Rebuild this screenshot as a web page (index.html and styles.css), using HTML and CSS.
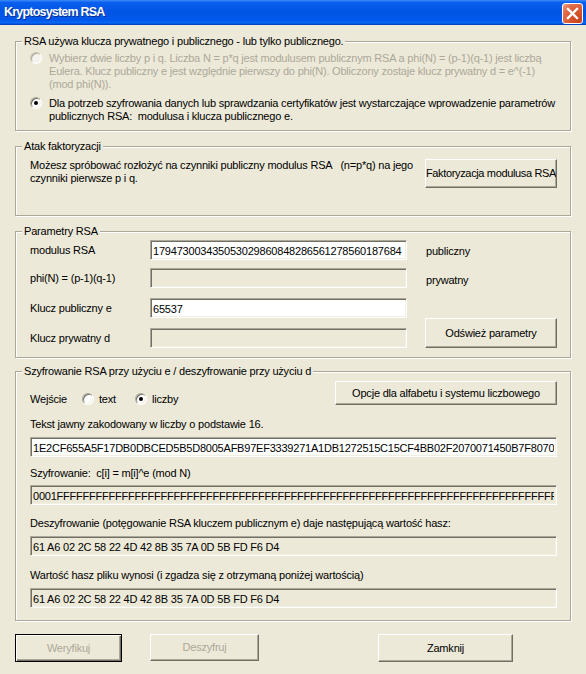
FILE: index.html
```html
<!DOCTYPE html>
<html lang="pl">
<head>
<meta charset="utf-8">
<title>Kryptosystem RSA</title>
<link rel="stylesheet" href="styles.css">
</head>
<body>
<div class="titlebar">
  <span class="title">Kryptosystem RSA</span>
  <span class="close" aria-label="Zamknij">
    <svg width="19" height="19" viewBox="0 0 19 19"><path d="M5 5 L14 14 M14 5 L5 14" stroke="#fff" stroke-width="2.4" stroke-linecap="square" fill="none"/></svg>
  </span>
</div>

<div class="main">
  <section class="group g1">
    <div class="legend">RSA używa klucza prywatnego i publicznego - lub tylko publicznego.</div>
    <div class="opt disabled first">
      <span class="radio"></span>
      <p>Wybierz dwie liczby p i q. Liczba N = p*q jest modulusem publicznym RSA a phi(N) = (p-1)(q-1) jest liczbą<br>Eulera. Klucz publiczny e jest względnie pierwszy do phi(N). Obliczony zostaje klucz prywatny d = e^(-1)<br>(mod phi(N)).</p>
    </div>
    <div class="opt second">
      <span class="radio checked"></span>
      <p>Dla potrzeb szyfrowania danych lub sprawdzania certyfikatów jest wystarczające wprowadzenie parametrów<br>publicznych RSA:&nbsp; modulusa i klucza publicznego e.</p>
    </div>
  </section>

  <section class="group g2">
    <div class="legend">Atak faktoryzacji</div>
    <div class="factor-row">
      <p>Możesz spróbować rozłożyć na czynniki publiczny modulus RSA &nbsp; (n=p*q) na jego<br>czynniki pierwsze p i q.</p>
      <button class="btn btn-factor" type="button"><span>Faktoryzacja modulusa RSA</span></button>
    </div>
  </section>

  <section class="group g3">
    <div class="legend">Parametry RSA</div>
    <div class="params">
      <label class="plabel">modulus RSA</label>
      <input class="field" type="text" value="179473003435053029860848286561278560187684" readonly>
      <span class="pnote">publiczny</span>

      <label class="plabel">phi(N) = (p-1)(q-1)</label>
      <input class="field off" type="text" value="" readonly>
      <span class="pnote pnote2">prywatny</span>

      <label class="plabel">Klucz publiczny e</label>
      <input class="field" type="text" value="65537" readonly>
      <button class="btn btn-refresh" type="button">Odśwież parametry</button>

      <label class="plabel">Klucz prywatny d</label>
      <input class="field off" type="text" value="" readonly>
    </div>
  </section>

  <section class="group g4">
    <div class="legend">Szyfrowanie RSA przy użyciu e / deszyfrowanie przy użyciu d</div>
    <div class="input-row">
      <div class="choice">
        <span class="w-label">Wejście</span>
        <span class="rchoice"><span class="radio"></span>text</span>
        <span class="rchoice"><span class="radio checked"></span>liczby</span>
      </div>
      <button class="btn btn-options" type="button">Opcje dla alfabetu i systemu liczbowego</button>
    </div>
    <div class="flabel l1">Tekst jawny zakodowany w liczby o podstawie 16.</div>
    <input class="field hex f1" type="text" value="1E2CF655A5F17DB0DBCED5B5D8005AFB97EF3339271A1DB1272515C15CF4BB02F2070071450B7F8070" readonly>
    <div class="flabel l2">Szyfrowanie:&nbsp; c[i] = m[i]^e (mod N)</div>
    <input class="field off hex f2" type="text" value="0001FFFFFFFFFFFFFFFFFFFFFFFFFFFFFFFFFFFFFFFFFFFFFFFFFFFFFFFFFFFFFFFFFFFFFFFFFFFFFFFFFFFFFFFFFFFFFFFFFFFF" readonly>
    <div class="flabel l3">Deszyfrowanie (potęgowanie RSA kluczem publicznym e) daje następującą wartość hasz:</div>
    <input class="field off f3" type="text" value="61 A6 02 2C 58 22 4D 42 8B 35 7A 0D 5B FD F6 D4" readonly>
    <div class="flabel l4">Wartość hasz pliku wynosi (i zgadza się z otrzymaną poniżej wartością)</div>
    <input class="field off f4" type="text" value="61 A6 02 2C 58 22 4D 42 8B 35 7A 0D 5B FD F6 D4" readonly>
  </section>

  <div class="actions">
    <button class="btn btn-default" type="button" disabled>Weryfikuj</button>
    <button class="btn btn-dec" type="button" disabled>Deszyfruj</button>
    <button class="btn btn-close" type="button">Zamknij</button>
  </div>
</div>
</body>
</html>
```

FILE: styles.css
```css
* { box-sizing: border-box; }

html, body { margin: 0; padding: 0; }

body {
  width: 586px;
  height: 674px;
  overflow: hidden;
  background: #ECE9D8;
  color: #000;
  font-family: "Liberation Sans", Arial, sans-serif;
  font-size: 11px;
  line-height: 13px;
  letter-spacing: -0.2px;
}

p { margin: 0; }

/* ---------- title bar ---------- */
.titlebar {
  height: 25px;
  display: flex;
  align-items: center;
  justify-content: space-between;
  padding: 0 3px 0 4px;
  background: linear-gradient(180deg, #3C8CF7 0%, #0A5FEE 10%, #0055E5 45%, #0058EA 80%, #0766F4 90%, #0050DA 96%, #0038B8 100%);
}

.title {
  color: #fff;
  font-weight: bold;
  font-size: 12.5px;
  letter-spacing: -0.8px;
  text-shadow: 1px 1px 0 #0A2D8F;
}

.close {
  width: 21px;
  height: 21px;
  margin-top: 1px;
  border: 1px solid #fff;
  border-radius: 3px;
  display: flex;
  align-items: center;
  justify-content: center;
  background: radial-gradient(circle at 85% 85%, #C9431A 0%, #DB5A33 50%, #E2724E 75%, #F0A88E 100%);
}

/* ---------- main area ---------- */
.main {
  padding: 0 15px;
}

.group {
  border: 1px solid #ACA899;
  box-shadow: inset 1px 1px 0 #fff, 1px 1px 0 #fff;
  padding: 0 13px 0 14px;
}

.legend {
  display: table;
  margin: -7px 0 0 -8px;
  padding: 0 2px;
  background: #ECE9D8;
  white-space: nowrap;
}

/* group 1 */
.g1 { margin-top: 16px; height: 90px; }

.opt {
  display: flex;
  align-items: flex-start;
  white-space: nowrap;
}
.opt.first { margin-top: 4px; }
.opt.second { margin-top: 6px; }
.opt .radio { margin-right: 7px; }
.opt.disabled { color: #ACA899; }

.radio {
  display: inline-block;
  flex: none;
  position: relative;
  width: 12px;
  height: 12px;
  border-radius: 50%;
  border: 1px solid;
  border-color: #ACA899 #fff #fff #ACA899;
  background: #fff;
  box-shadow: inset 1px 1px 0 #716F64, inset -1px -1px 0 #F1EFE2;
}
.opt.disabled .radio {
  background: #F4F3EE;
  border-color: #CBC7B8 #fff #fff #CBC7B8;
  box-shadow: inset 1px 1px 0 #ACA899;
}
.radio.checked::after {
  content: "";
  position: absolute;
  left: 3px;
  top: 3px;
  width: 4px;
  height: 4px;
  border-radius: 50%;
  background: #000;
}

/* group 2 */
.g2 { margin-top: 15px; height: 70px; }

.factor-row {
  margin-top: 6px;
  display: flex;
  justify-content: space-between;
  align-items: flex-start;
  white-space: nowrap;
}

/* buttons */
.btn {
  font: inherit;
  letter-spacing: inherit;
  color: #000;
  background: #ECE9D8;
  border: 1px solid;
  border-color: #fff #716F64 #716F64 #fff;
  box-shadow: inset -1px -1px 0 #ACA899;
  padding: 0;
  white-space: nowrap;
  overflow: hidden;
  display: flex;
  align-items: center;
  justify-content: center;
}
.btn:disabled { color: #ACA899; }

.btn-factor {
  width: 132px;
  height: 29px;
  letter-spacing: -0.35px;
}
.btn-factor span { flex: none; }

/* group 3 */
.g3 { margin-top: 15px; height: 127px; }

.params {
  margin-top: 2px;
  display: grid;
  grid-template-columns: 120px 257px 1fr;
  grid-template-rows: 28px 30px 30px 20px;
}
.plabel {
  padding-top: 4px;
  white-space: nowrap;
}
.pnote {
  padding: 5px 0 0 19px;
}
.pnote2 { padding-top: 6px; }

.btn-refresh {
  grid-column: 3;
  grid-row: 3 / span 2;
  align-self: end;
  justify-self: end;
  width: 132px;
  height: 30px;
}

/* fields */
.field {
  display: block;
  width: 100%;
  height: 20px;
  margin: 0;
  font: inherit;
  letter-spacing: inherit;
  color: #000;
  background: #fff;
  border: 1px solid;
  border-color: #ACA899 #fff #fff #ACA899;
  box-shadow: inset 1px 1px 0 #716F64, inset -1px -1px 0 #F1EFE2;
  padding: 2px 2px 0;
  outline: none;
}
.field.off { background: #ECE9D8; }
.hex { letter-spacing: -0.22px; }

.params .field { align-self: start; }

/* group 4 */
.g4 { margin-top: 13px; height: 250px; }

.input-row {
  margin-top: 3px;
  display: flex;
  justify-content: space-between;
  align-items: flex-start;
}
.choice {
  display: flex;
  align-items: flex-start;
  padding-top: 12px;
  white-space: nowrap;
}
.w-label { width: 52px; }
.rchoice {
  display: flex;
  align-items: flex-start;
  width: 53px;
}
.rchoice .radio { margin-right: 5px; }

.btn-options {
  width: 222px;
  height: 24px;
}

.flabel { white-space: nowrap; }
.l1 { margin-top: 12px; }
.f1 { margin-top: 6px; }
.l2 { margin-top: 10px; }
.f2 { margin-top: 5px; }
.l3 { margin-top: 12px; }
.f3 { margin-top: 6px; }
.l4 { margin-top: 13px; }
.f4 { margin-top: 6px; }

/* bottom buttons */
.actions {
  margin-top: 13px;
  display: flex;
  align-items: flex-start;
}
.btn-default {
  width: 107px;
  height: 28px;
  border: 1px solid #000;
  box-shadow: inset 1px 1px 0 #fff, inset -1px -1px 0 #716F64, inset -2px -2px 0 #ACA899;
}
.btn-dec {
  width: 109px;
  height: 27px;
  margin-left: 28px;
}
.btn-close {
  width: 135px;
  height: 28px;
  margin-left: 119px;
}
```
